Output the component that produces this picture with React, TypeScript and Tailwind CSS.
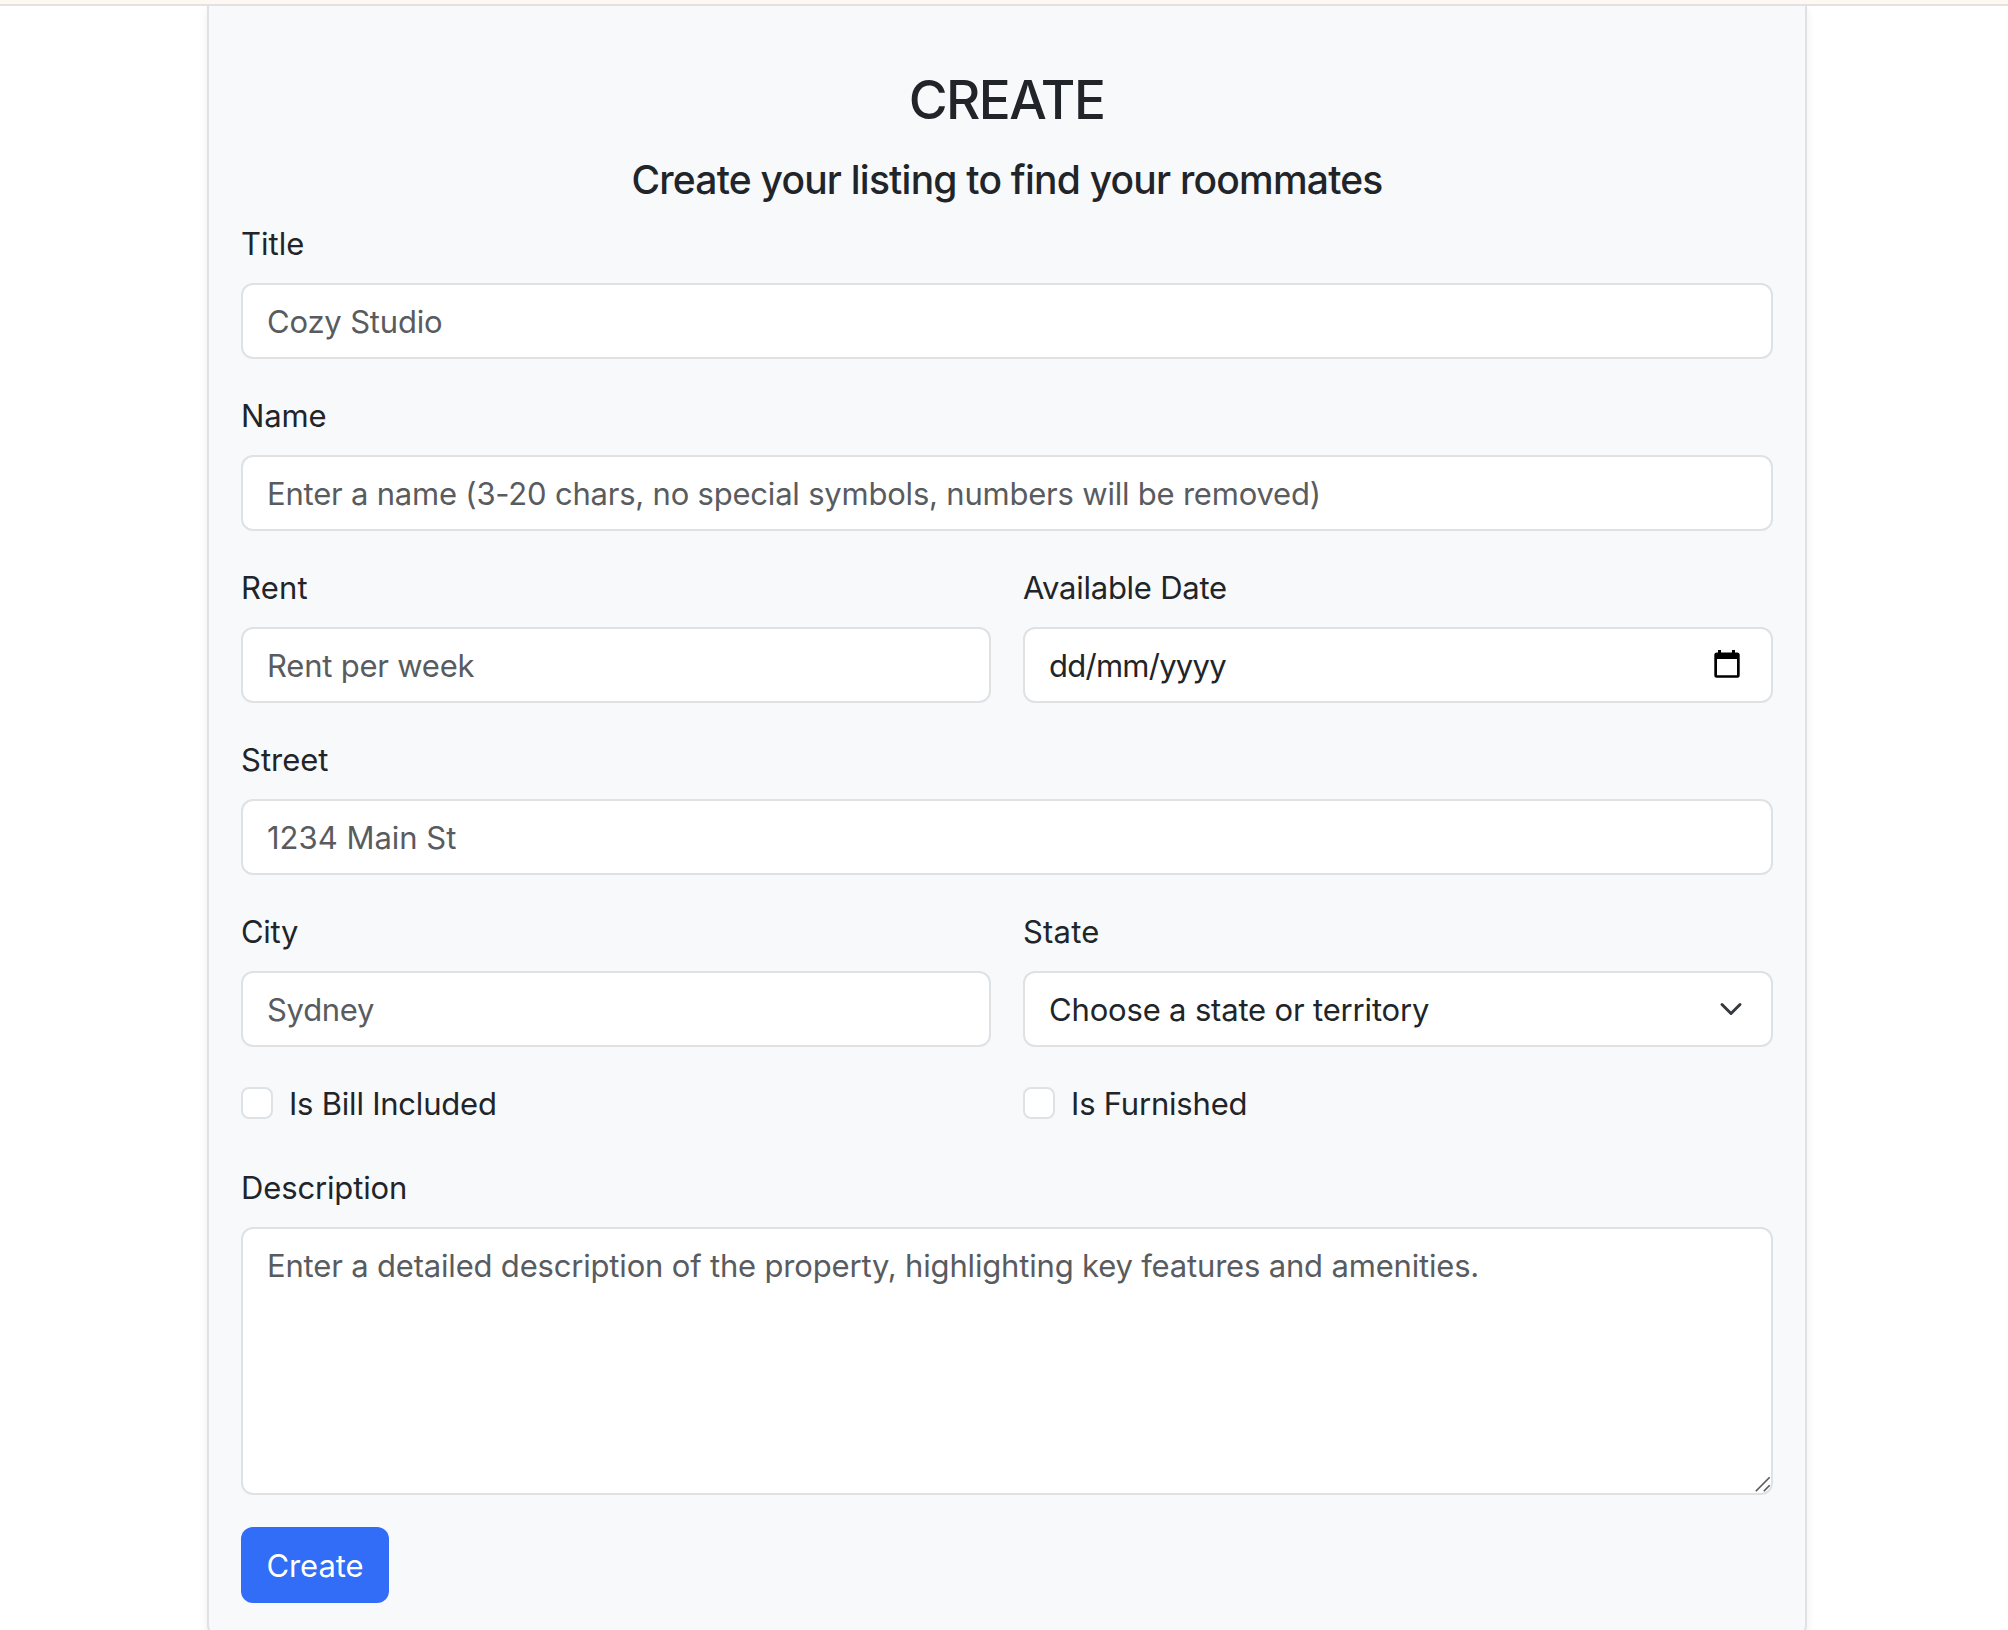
import React from "react";

const box =
  "block h-[76px] w-full appearance-none rounded-[12px] border-2 border-[#dee2e5] bg-white px-6 text-[31px] leading-[48px] text-[#212529] outline-none placeholder:text-[#595c5f] placeholder:opacity-100";
const control = `${box} pt-[12px] pb-[12px]`;
const picker = `${box} pt-[13px] pb-[11px]`;

function Field({
  label,
  tracking = "tracking-normal",
  children,
}: {
  label: string;
  tracking?: string;
  children: React.ReactNode;
}) {
  return (
    <label className="block min-w-0 flex-1">
      <span className={`mb-4 block h-12 leading-[50px] ${tracking}`}>{label}</span>
      {children}
    </label>
  );
}

function Check({ label, tracking }: { label: string; tracking: string }) {
  return (
    <label className="flex h-[52px] flex-1 items-start">
      <input
        type="checkbox"
        className="mt-2 size-8 shrink-0 appearance-none rounded-[8px] border-2 border-[#dee2e5] bg-white"
      />
      <span className={`ml-4 h-12 leading-[50px] ${tracking}`}>{label}</span>
    </label>
  );
}

function CalendarIcon() {
  return (
    <svg width="26" height="28" viewBox="0 0 26 28" className="mr-[7px] mb-1">
      <path
        fillRule="evenodd"
        d="M4 0h3v2.4h11V0h3v2.4h2.2A2.5 2.5 0 0 1 25.700 4.900v20.400A2.500 2.500 0 0 1 23.200 27.800H2.800A2.500 2.500 0 0 1 .3 25.300V4.900A2.500 2.500 0 0 1 2.800 2.400H4zM3 9v16.200h20V9z"
        fill="#000"
      />
    </svg>
  );
}

export default function App() {
  return (
    <div className="flex h-[1630px] w-full flex-col overflow-hidden bg-white font-['Inter',sans-serif] text-[31px] text-[#212529]">
      <div className="z-10 h-[6px] shrink-0 border-b-2 border-[#e8e0df] bg-[#fef8f4]" />
      <main className="ml-[207px] h-[1631px] w-[1600px] shrink-0 rounded-b-[12px] border-x-2 border-b-2 border-[#dee2e5] bg-[#f8f9fb] px-8 pt-[60px] shadow-[0_4px_8px_rgba(0,0,0,0.075)]">
        <h1 className="h-[90px] pr-px text-center text-[53px] leading-[68px] font-medium tracking-[-1.5px]">
          CREATE
        </h1>
        <h2 className="h-[63px] text-center text-[39px] leading-[48px] font-medium tracking-[-0.78px]">
          Create your listing to find your roommates
        </h2>

        <form className="flex flex-col gap-8">
          <Field label="Title">
            <input className={`${control} tracking-[-0.18px]`} placeholder="Cozy Studio" />
          </Field>
          <Field label="Name" tracking="tracking-[-0.15px]">
            <input
              className={`${control} tracking-[-0.21px]`}
              placeholder="Enter a name (3-20 chars, no special symbols, numbers will be removed)"
            />
          </Field>
          <div className="flex gap-8">
            <Field label="Rent" tracking="tracking-[0.2px]">
              <input className={`${control} tracking-[-0.22px]`} placeholder="Rent per week" />
            </Field>
            <Field label="Available Date" tracking="tracking-[-0.25px]">
              <div className={`${picker} tracking-[-0.74px]`}>
                <div className="flex h-12 items-center justify-between">
                  <span>dd/mm/yyyy</span>
                  <CalendarIcon />
                </div>
              </div>
            </Field>
          </div>
          <Field label="Street">
            <input className={control} placeholder="1234 Main St" />
          </Field>
          <div className="flex gap-8">
            <Field label="City" tracking="tracking-[-0.3px]">
              <input className={`${control} tracking-[-0.29px]`} placeholder="Sydney" />
            </Field>
            <Field label="State" tracking="tracking-[0.2px]">
              <div className="relative">
                <select className={`${picker} tracking-[-0.17px]`}>
                  <option>Choose a state or territory</option>
                </select>
                <svg
                  viewBox="0 0 16 16"
                  className="pointer-events-none absolute top-[26px] right-[30px] size-6"
                >
                  <path
                    d="m2 5 6 6 6-6"
                    fill="none"
                    stroke="#343a40"
                    strokeWidth="2"
                    strokeLinecap="round"
                    strokeLinejoin="round"
                  />
                </svg>
              </div>
            </Field>
          </div>
          <div className="flex gap-8">
            <Check label="Is Bill Included" tracking="tracking-[-0.22px]" />
            <Check label="Is Furnished" tracking="tracking-[-0.2px]" />
          </div>
          <Field label="Description" tracking="tracking-[-0.14px]">
            <div className="relative">
              <textarea
                className="block h-[268px] w-full resize-none rounded-[12px] border-2 border-[#dee2e5] bg-white px-6 pt-[13px] text-[31px] leading-[48px] tracking-[-0.18px] outline-none placeholder:text-[#595c5f] placeholder:opacity-100"
                placeholder="Enter a detailed description of the property, highlighting key features and amenities."
              />
              <svg
                viewBox="0 0 16 16"
                className="pointer-events-none absolute right-[2px] bottom-[3px] size-4"
              >
                <path d="M.8 15.200 14.700 1.300M8.800 15.200l5.900-5.900" stroke="#555" strokeWidth="1.6" />
              </svg>
            </div>
          </Field>
          <button
            type="button"
            className="h-[76px] w-[148px] self-start rounded-[12px] bg-[#316df6] pt-[2px] text-white tracking-[-0.08px]"
          >
            Create
          </button>
        </form>
      </main>
    </div>
  );
}
